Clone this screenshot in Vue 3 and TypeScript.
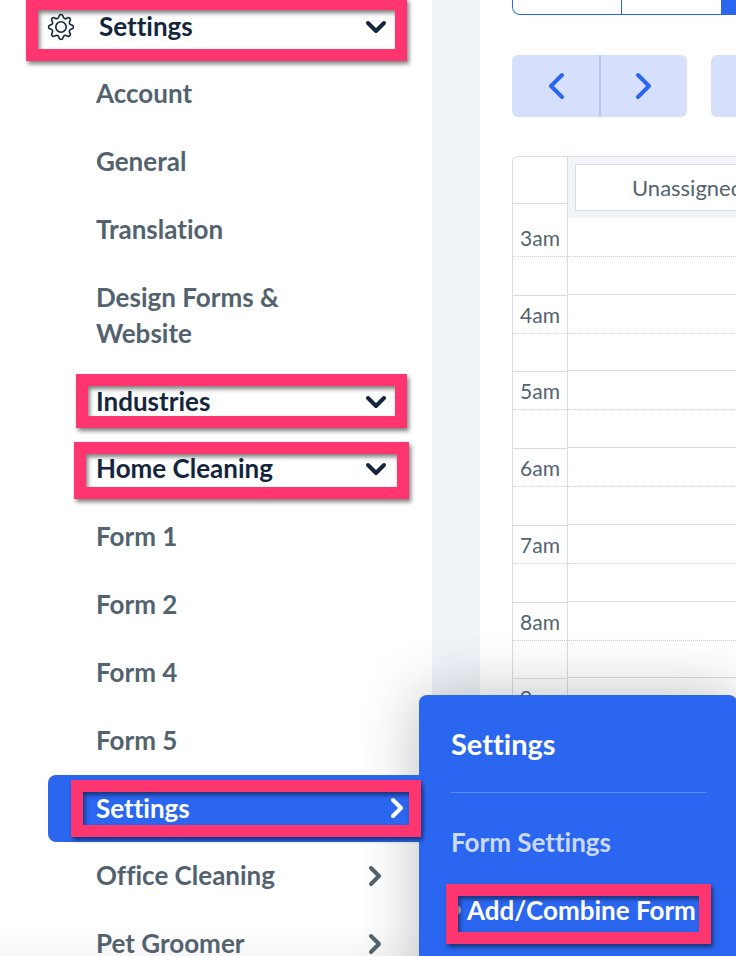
<script setup lang="ts">
import { ref } from 'vue'

type Kind = 'link' | 'open' | 'closed' | 'active'

interface MenuItem {
  label: string
  kind: Kind
  mark?: string
}

const items: MenuItem[] = [
  { label: 'Account', kind: 'link' },
  { label: 'General', kind: 'link' },
  { label: 'Translation', kind: 'link' },
  { label: 'Design Forms & Website', kind: 'link' },
  { label: 'Industries', kind: 'open', mark: 'mark-industries' },
  { label: 'Home Cleaning', kind: 'open', mark: 'mark-home' },
  { label: 'Form 1', kind: 'link' },
  { label: 'Form 2', kind: 'link' },
  { label: 'Form 4', kind: 'link' },
  { label: 'Form 5', kind: 'link' },
  { label: 'Settings', kind: 'active', mark: 'mark-active' },
  { label: 'Office Cleaning', kind: 'closed' },
  { label: 'Pet Groomer', kind: 'closed' },
]

const hours: string[] = ['3am', '4am', '5am', '6am', '7am', '8am', '9am']
const view = ref<number>(2)
const teethAngles = [0, 45, 90, 135, 180, 225, 270, 315]
const gear = teethAngles
  .map((a, i) => {
    const p = (r: number, d: number): string => {
      const t = ((a + d - 90) * Math.PI) / 180
      return `${(14 + r * Math.cos(t)).toFixed(2)} ${(14 + r * Math.sin(t)).toFixed(2)}`
    }
    const start = i === 0 ? `M${p(12, -7)}` : `L${p(12, -7)}`
    return `${start}Q${p(13, 0)} ${p(12, 7)}L${p(10.6, 11)}Q${p(8, 22.5)} ${p(10.6, 34)}`
  })
  .join('') + 'Z'
</script>

<template>
  <div class="page">
    <aside class="sidebar">
      <button class="root" type="button">
        <svg class="gear" viewBox="0 0 28 28" aria-hidden="true">
          <path :d="gear" />
          <circle cx="14" cy="14" r="5.2" />
        </svg>
        <span class="label">Settings</span>
        <svg class="chevron" viewBox="0 0 24 24" aria-hidden="true"><path d="M4 8l8 8 8-8" /></svg>
        <span class="mark mark-root"></span>
      </button>
      <nav class="menu" aria-label="Settings menu">
        <a v-for="(item, i) in items" :key="i" href="#" class="item" :class="item.kind">
          <span class="label">{{ item.label }}</span>
          <svg v-if="item.kind !== 'link'" class="chevron" viewBox="0 0 24 24" aria-hidden="true">
            <path :d="item.kind === 'open' ? 'M4 8l8 8 8-8' : 'M9 4l8 8-8 8'" />
          </svg>
          <span v-if="item.mark" class="mark" :class="item.mark"></span>
        </a>
      </nav>
      <section class="flyout">
        <h2>Settings</h2>
        <h3>Form Settings</h3>
        <a href="#" class="sub">
          <span class="dot"></span>Add/Combine Form
          <span class="mark mark-sub"></span>
        </a>
      </section>
    </aside>

    <main class="calendar">
      <div class="views">
        <button
          v-for="n in 3"
          :key="n"
          type="button"
          :class="{ selected: view === n - 1 }"
          :aria-label="`View ${n}`"
          @click="view = n - 1"
        ></button>
      </div>
      <div class="pager">
        <div class="pair">
          <button type="button" aria-label="Previous">
            <svg viewBox="0 0 32 32" aria-hidden="true"><path d="M22 5L11 16l11 11" /></svg>
          </button>
          <button type="button" aria-label="Next">
            <svg viewBox="0 0 32 32" aria-hidden="true"><path d="M10 5l11 11-11 11" /></svg>
          </button>
        </div>
        <button class="today" type="button" aria-label="Today"></button>
      </div>
      <div class="schedule">
        <div class="times">
          <div class="corner"></div>
          <div v-for="h in hours" :key="h" class="hour"><span>{{ h }}</span></div>
        </div>
        <div class="lane">
          <div class="lane-head"><span>Unassigned</span></div>
          <div class="slots">
            <div v-for="h in hours" :key="h" class="slot"></div>
          </div>
        </div>
      </div>
    </main>
  </div>
</template>

<style>
body {
  margin: 0;
  background: #fff;
  overflow: hidden;
}
</style>

<style scoped>
* {
  box-sizing: border-box;
}
.page {
  display: flex;
  height: 100vh;
  overflow: hidden;
  font-family: Lato, "Liberation Sans", sans-serif;
  font-variant-ligatures: none;
  color: #52636f;
}
button {
  font: inherit;
  font-variant-ligatures: none;
  border: 0;
  padding: 0;
  margin: 0;
  background: none;
}
.sidebar {
  position: relative;
  flex: 0 0 432px;
  background: linear-gradient(#fff 926px, #f6f6f6 956px);
}
.root {
  position: relative;
  display: flex;
  align-items: center;
  width: 100%;
  height: 60px;
  padding: 0 44px 6px 47px;
  color: #13263d;
  text-align: left;
}
.gear {
  width: 28px;
  height: 28px;
  margin-right: 24px;
  fill: none;
  stroke: #13263d;
  stroke-width: 1.6;
  stroke-linejoin: round;
}
.label {
  flex: 1;
  padding-bottom: 2px;
  font-size: 26px;
  line-height: 36px;
  font-weight: 700;
}
.chevron {
  flex: none;
  width: 24px;
  height: 24px;
  fill: none;
  stroke: currentColor;
  stroke-width: 4;
  stroke-linecap: round;
  stroke-linejoin: round;
}
.menu {
  display: flex;
  flex-direction: column;
}
.item {
  position: relative;
  display: flex;
  align-items: center;
  min-height: 68px;
  padding: 15px 46px 15px 96px;
  color: inherit;
  text-decoration: none;
}
.item.link {
  padding-right: 120px;
}
.item.open {
  color: #13263d;
  padding-right: 44px;
}
.item.active {
  z-index: 3;
  min-height: 67px;
  margin-left: 48px;
  padding: 15px 24px 16px 48px;
  border-radius: 8px 0 0 8px;
  background: #2a66f0;
  color: #fff;
}
.item.active .label {
  padding-bottom: 0;
}
.item.open + .item.open {
  min-height: 67px;
  padding-top: 14px;
}
.mark {
  position: absolute;
  z-index: 3;
  border: 12px solid #ff356f;
  filter: drop-shadow(2px 3px 2px rgba(0, 0, 0, 0.5));
  pointer-events: none;
}
.mark-root {
  inset: -2px 25px -1px 26px;
}
.mark-industries {
  inset: 6px 25px 8px 76px;
}
.mark-home {
  inset: 6px 23px 4px 74px;
}
.mark-active {
  inset: 5px 11px 5px 23px;
}
.mark-sub {
  inset: 8px -4px 0 -5px;
}
.flyout {
  position: absolute;
  z-index: 2;
  top: 695px;
  left: 419px;
  width: 318px;
  min-height: 300px;
  padding: 28px 30px 40px 32px;
  border-radius: 8px;
  background: #2a66f0;
  box-shadow: 0 0 60px rgba(30, 38, 42, 0.3);
  color: #fff;
}
h2 {
  margin: 0 0 31px;
  padding-bottom: 28px;
  border-bottom: 1px solid #5d8bf5;
  font-size: 29px;
  line-height: 41px;
  font-weight: 700;
}
h3 {
  margin: 0;
  font-size: 26px;
  line-height: 36px;
  font-weight: 700;
  color: #cbd9fc;
}
.sub {
  position: relative;
  display: flex;
  align-items: center;
  width: 256px;
  height: 68px;
  margin-top: 16px;
  color: #fff;
  font-size: 26px;
  font-weight: 700;
  white-space: nowrap;
  text-decoration: none;
}
.dot {
  width: 10px;
  height: 10px;
  margin-right: 6px;
  border-radius: 50%;
  background: #c8cbd2;
}
.calendar {
  flex: 1;
  min-width: 0;
  padding-left: 32px;
  border-left: 48px solid #eff4f9;
  overflow: hidden;
}
.views {
  display: grid;
  grid-template-columns: 108px 100px 102px;
  width: 312px;
  height: 15px;
  border: 1px solid #2a66f0;
  border-top: 0;
  border-radius: 0 0 8px 8px;
  overflow: hidden;
}
.views button + button {
  border-left: 1px solid #2a66f0;
}
.views .selected {
  background: #2a66f0;
}
.pager {
  display: flex;
  gap: 24px;
  margin-top: 40px;
}
.pair {
  display: flex;
  flex: none;
}
.pair button {
  display: grid;
  place-items: center;
  width: 87px;
  height: 62px;
  border-radius: 0 6px 6px 0;
  background: #d6dffc;
}
.pair button:first-child {
  width: 88px;
  border-right: 1px solid #b5c6f8;
  border-radius: 6px 0 0 6px;
}
.pair button:last-child {
  border-left: 1px solid #b5c6f8;
}
.pair svg {
  width: 32px;
  height: 32px;
  fill: none;
  stroke: #2a66f0;
  stroke-width: 4;
  stroke-linecap: round;
  stroke-linejoin: round;
}
.today {
  flex: none;
  width: 110px;
  height: 62px;
  border-radius: 6px;
  background: #d6dffc;
}
.schedule {
  display: flex;
  margin-top: 39px;
  border-top: 1px solid #dbdcdd;
  border-left: 1px solid #dbdcdd;
  border-radius: 6px 0 0 0;
}
.times {
  flex: 0 0 55px;
  border-right: 1px solid #dbdcdd;
  font-size: 21px;
}
.corner {
  height: 47px;
  margin-bottom: 15px;
  border-bottom: 1px solid #dbdcdd;
}
.hour {
  display: grid;
  grid-template-rows: 38px 1fr;
  border-bottom: 1px solid #dbdcdd;
  height: 77px;
}
.hour:nth-child(4n + 3),
.slot:nth-child(4n + 2) {
  height: 76px;
}
.hour span {
  display: grid;
  place-items: center;
  border-bottom: 1px dotted #d0d2d4;
}
.lane {
  flex: 1;
  min-width: 240px;
}
.lane-head {
  height: 61px;
  padding: 7px;
  background: #f1f4f8;
}
.lane-head span {
  display: block;
  height: 47px;
  padding-left: 56px;
  border: 1px solid #d9dee4;
  background: #fff;
  font-size: 22px;
  line-height: 46px;
}
.slot {
  height: 77px;
  border-bottom: 1px solid #dbdcdd;
}
.slot::before {
  content: "";
  display: block;
  height: 38px;
  border-bottom: 1px dotted #d0d2d4;
}
</style>
